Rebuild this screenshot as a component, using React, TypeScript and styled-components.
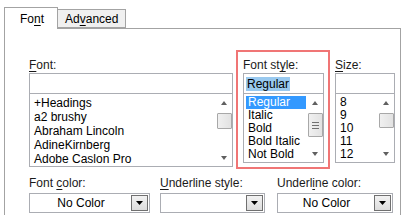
import React from 'react';
import styled, { createGlobalStyle } from 'styled-components';

const GlobalStyle = createGlobalStyle`
    html, body {
        margin: 0;
        padding: 0;
        background: #ffffff;
    }
    body {
        font-family: 'Liberation Sans', Arial, sans-serif;
        font-size: 12px;
        color: #000000;
        overflow: hidden;
    }
    u {
        text-decoration-thickness: 1px;
        text-underline-offset: 2px;
    }
`;

const fonts = ['+Headings', 'a2 brushy', 'Abraham Lincoln', 'AdineKirnberg', 'Adobe Caslon Pro'];
const styles = ['Regular', 'Italic', 'Bold', 'Bold Italic', 'Not Bold'];
const sizes = ['8', '9', '10', '11', '12'];

type ListProps = {
    items: string[];
    selected?: number;
    thumbHeight: number;
    grip?: boolean;
    height: number;
    rowHeight: number;
};

const ListBox = (props: ListProps) => {
    return (
        <StyledList $height={props.height}>
            <Items>
                {props.items.map((item, i) => (
                    <Item key={item} $row={props.rowHeight} $selected={i === props.selected}>
                        {item}
                    </Item>
                ))}
            </Items>
            <ScrollBar>
                <Arrow $up />
                <Track>
                    <Thumb style={{ height: props.thumbHeight }}>{props.grip && <Grip />}</Thumb>
                </Track>
                <Arrow />
            </ScrollBar>
        </StyledList>
    );
};

const DropArrow = () => (
    <DropButton>
        <svg width="7" height="4" viewBox="0 0 7 4">
            <path d="M0 0 H7 L3.5 4 Z" fill="#000" />
        </svg>
    </DropButton>
);

export default function App() {
    return (
        <Dialog>
            <GlobalStyle />
            <TabStrip>
                <Tab $active>
                    Fo<u>n</u>t
                </Tab>
                <Tab>
                    Ad<u>v</u>anced
                </Tab>
            </TabStrip>
            <Panel>
                <TopRow>
                    <Column>
                        <Label>
                            <u>F</u>ont:
                        </Label>
                        <TextBox />
                        <ListBox items={fonts} thumbHeight={16} height={74} rowHeight={14} />
                    </Column>
                    <Highlight>
                        <Label>
                            Font st<u>y</u>le:
                        </Label>
                        <TextBox>
                            <SelectedText>Regular</SelectedText>
                        </TextBox>
                        <ListBox items={styles} selected={0} thumbHeight={24} grip height={70} rowHeight={13} />
                    </Highlight>
                    <Column>
                        <Label>
                            <u>S</u>ize:
                        </Label>
                        <TextBox />
                        <ListBox items={sizes} thumbHeight={15} height={70} rowHeight={13} />
                    </Column>
                </TopRow>
                <BottomRow>
                    <Column>
                        <Label>
                            Font <u>c</u>olor:
                        </Label>
                        <Combo>
                            <ComboText>No Color</ComboText>
                            <DropArrow />
                        </Combo>
                    </Column>
                    <Column>
                        <Label>
                            <u>U</u>nderline style:
                        </Label>
                        <Combo>
                            <ComboText />
                            <DropArrow />
                        </Combo>
                    </Column>
                    <Column>
                        <Label>
                            Underl<u>i</u>ne color:
                        </Label>
                        <Combo>
                            <ComboText>No Color</ComboText>
                            <DropArrow />
                        </Combo>
                    </Column>
                </BottomRow>
            </Panel>
        </Dialog>
    );
}

const Dialog = styled.div`
    width: 407px;
    height: 215px;
    padding: 7px 6px 0 4px;
    box-sizing: border-box;
    display: flex;
    flex-direction: column;
`;

const TabStrip = styled.div`
    display: flex;
    align-items: flex-end;
`;

const Tab = styled.div<{ $active?: boolean }>`
    position: relative;
    z-index: ${(p) => (p.$active ? 1 : 0)};
    box-sizing: border-box;
    height: ${(p) => (p.$active ? '22px' : '19px')};
    margin-bottom: ${(p) => (p.$active ? '-1px' : '0')};
    padding: ${(p) => (p.$active ? '0 13px 0 15px' : '0 7px')};
    display: flex;
    align-items: center;
    background: ${(p) => (p.$active ? '#ffffff' : '#f0f0f0')};
    border: 1px solid #a3a3a3;
    border-bottom: ${(p) => (p.$active ? 'none' : '1px solid #a3a3a3')};
    border-left: ${(p) => (p.$active ? '1px solid #a3a3a3' : 'none')};
    line-height: 14px;
`;

const Panel = styled.div`
    flex: 1;
    border: 1px solid #a3a3a3;
    border-bottom: none;
    padding: 21px 0 0 24px;
    display: flex;
    flex-direction: column;
`;

const TopRow = styled.div`
    display: grid;
    grid-template-columns: 204px 94px 62px;
    column-gap: 3px;
    align-items: start;

    & > :last-child {
        margin-left: 2px;
    }
`;

const Column = styled.div`
    display: flex;
    flex-direction: column;
    padding-top: 8px;
`;

const Highlight = styled.div`
    display: flex;
    flex-direction: column;
    border: 2px solid #f07575;
    padding: 6px 4px 4px 5px;
`;

const Label = styled.div`
    height: 15px;
    line-height: 14px;
    color: #1a1a1a;
    white-space: nowrap;
`;

const TextBox = styled.div`
    box-sizing: border-box;
    height: 21px;
    border: 1px solid #abadb3;
    padding: 2px 2px;
    display: flex;
    align-items: center;
`;

const SelectedText = styled.span`
    background: #99c9ef;
    line-height: 14px;
    padding: 0 1px;
`;

const StyledList = styled.div<{ $height: number }>`
    box-sizing: border-box;
    height: ${(p) => p.$height}px;
    margin-top: -1px;
    border: 1px solid #abadb3;
    display: flex;
`;

const Items = styled.div`
    flex: 1;
    padding: 2px 1px 0 2px;
    overflow: hidden;
`;

const Item = styled.div<{ $selected?: boolean; $row: number }>`
    height: ${(p) => p.$row}px;
    line-height: ${(p) => p.$row}px;
    padding-left: 2px;
    white-space: nowrap;
    background: ${(p) => (p.$selected ? '#3399ff' : 'transparent')};
    color: ${(p) => (p.$selected ? '#ffffff' : '#000000')};
`;

const ScrollBar = styled.div`
    width: 16px;
    display: flex;
    flex-direction: column;
    background: #ffffff;
`;

const Arrow = styled.div<{ $up?: boolean }>`
    height: 17px;
    display: flex;
    align-items: center;
    justify-content: center;

    &::after {
        content: '';
        border-left: 3.5px solid transparent;
        border-right: 3.5px solid transparent;
        ${(p) => (p.$up ? 'border-bottom: 4px solid #606060;' : 'border-top: 4px solid #606060;')}
    }
`;

const Track = styled.div`
    flex: 1;
    display: flex;
    flex-direction: column;
    align-items: center;
    padding-top: 2px;
`;

const Thumb = styled.div`
    box-sizing: border-box;
    width: 15px;
    border: 1px solid #a8a8a8;
    border-radius: 1px;
    background: linear-gradient(to right, #f0f0f0, #e2e2e2);
    display: flex;
    align-items: center;
    justify-content: center;
`;

const Grip = styled.div`
    width: 7px;
    height: 5px;
    border-top: 1px solid #707070;
    border-bottom: 1px solid #707070;
    position: relative;

    &::after {
        content: '';
        position: absolute;
        left: 0;
        right: 0;
        top: 2px;
        border-top: 1px solid #707070;
    }
`;

const BottomRow = styled.div`
    display: grid;
    grid-template-columns: 121px 105px 118px;
    column-gap: 10px;
    margin-top: -1px;

    & > :last-child {
        margin-left: 2px;
    }

    ${Label} {
        height: 17px;
    }
`;

const Combo = styled.div`
    box-sizing: border-box;
    height: 20px;
    border: 1px solid #abadb3;
    display: flex;
    align-items: center;
    padding: 1px;
`;

const ComboText = styled.div`
    flex: 1;
    text-align: center;
    line-height: 14px;
`;

const DropButton = styled.div`
    box-sizing: border-box;
    width: 17px;
    height: 16px;
    border: 1px solid #707070;
    background: linear-gradient(#f2f2f2, #dcdcdc);
    display: flex;
    align-items: center;
    justify-content: center;
`;
